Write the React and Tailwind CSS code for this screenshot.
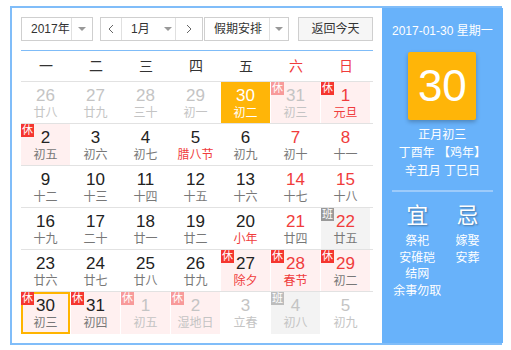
import React from 'react';

const font = "font-['Liberation_Sans','Noto_Sans_CJK_SC',sans-serif]";

// kind: cur | other ; red number ; fest = red lunar ; tag: 休 / 班
const rows = [
  [
    { d: 26, l: '廿八', other: true },
    { d: 27, l: '廿九', other: true },
    { d: 28, l: '三十', other: true },
    { d: 29, l: '初一', other: true },
    { d: 30, l: '初二', other: true, selected: true },
    { d: 31, l: '初三', other: true, tag: '休' },
    { d: 1, l: '元旦', red: true, fest: true, tag: '休' },
  ],
  [
    { d: 2, l: '初五', tag: '休' },
    { d: 3, l: '初六' },
    { d: 4, l: '初七' },
    { d: 5, l: '腊八节', fest: true },
    { d: 6, l: '初九' },
    { d: 7, l: '初十', red: true },
    { d: 8, l: '十一', red: true },
  ],
  [
    { d: 9, l: '十二' },
    { d: 10, l: '十三' },
    { d: 11, l: '十四' },
    { d: 12, l: '十五' },
    { d: 13, l: '十六' },
    { d: 14, l: '十七', red: true },
    { d: 15, l: '十八', red: true },
  ],
  [
    { d: 16, l: '十九' },
    { d: 17, l: '二十' },
    { d: 18, l: '廿一' },
    { d: 19, l: '廿二' },
    { d: 20, l: '小年', fest: true },
    { d: 21, l: '廿四', red: true },
    { d: 22, l: '廿五', red: true, tag: '班' },
  ],
  [
    { d: 23, l: '廿六' },
    { d: 24, l: '廿七' },
    { d: 25, l: '廿八' },
    { d: 26, l: '廿九' },
    { d: 27, l: '除夕', fest: true, tag: '休' },
    { d: 28, l: '春节', red: true, fest: true, tag: '休' },
    { d: 29, l: '初二', red: true, tag: '休' },
  ],
  [
    { d: 30, l: '初三', tag: '休', today: true },
    { d: 31, l: '初四', tag: '休' },
    { d: 1, l: '初五', other: true, tag: '休' },
    { d: 2, l: '湿地日', other: true, tag: '休' },
    { d: 3, l: '立春', other: true },
    { d: 4, l: '初八', other: true, tag: '班' },
    { d: 5, l: '初九', other: true },
  ],
];

const Caret = () => (
  <span className="w-0 h-0 border-l-[4px] border-r-[4px] border-t-[4px] border-l-transparent border-r-transparent border-t-[#999]" />
);

const Chevron = ({ dir }) => (
  <svg width="6" height="10" viewBox="0 0 6 10">
    <polyline
      points={dir === 'left' ? '5,1 1,5 5,9' : '1,1 5,5 1,9'}
      fill="none"
      stroke="#666"
      strokeWidth="1"
    />
  </svg>
);

function Cell({ c }) {
  let bg = '';
  if (c.selected) bg = 'bg-[#ffb508]';
  else if (c.tag === '休') bg = 'bg-[#fff0f0]';
  else if (c.tag === '班') bg = 'bg-[#f3f3f3]';

  let numColor = 'text-[#222]';
  if (c.selected) numColor = 'text-white';
  else if (c.other) numColor = 'text-[#c4c4c4]';
  else if (c.red) numColor = 'text-[#f03c3c]';

  let lunColor = 'text-[#777]';
  if (c.selected) lunColor = 'text-white';
  else if (c.other) lunColor = 'text-[#c4c4c4]';
  else if (c.fest) lunColor = 'text-[#f03c3c]';

  let tagBg = '';
  if (c.tag === '休') tagBg = c.other ? 'bg-[#f89a9a]' : 'bg-[#f5362f]';
  if (c.tag === '班') tagBg = c.other ? 'bg-[#bdbdbd]' : 'bg-[#999]';

  return (
    <div
      className={`relative w-[50px] h-full border-r border-white flex flex-col items-center pt-[4px] ${bg} ${
        c.today ? 'ring-2 ring-inset ring-[#ffb400]' : ''
      }`}
    >
      {c.tag && (
        <span
          className={`absolute left-0 top-0 w-[13px] h-[13px] text-[11px] leading-[13px] text-center text-white ${tagBg}`}
        >
          {c.tag}
        </span>
      )}
      <span className={`text-[17px] leading-[20px] ${numColor}`}>{c.d}</span>
      <span className={`text-[12px] leading-[14px] ${lunColor}`}>{c.l}</span>
    </div>
  );
}

export default function App() {
  const weekdays = ['一', '二', '三', '四', '五', '六', '日'];

  return (
    <div className={`pt-[6px] pl-[10px] bg-white w-[511px] h-[350px] ${font}`}>
      <div className="w-[492px] h-[339px] border-2 border-[#80bdf9] flex">
        {/* left: calendar */}
        <div className="w-[370px] h-full pt-[9px] px-[9px] bg-white">
          <div className="flex h-[24px] text-[12px] text-[#333]">
            <div className="w-[72px] h-full border border-[#cfcfcf] flex">
              <span className="w-[50px] pl-[9px] flex items-center border-r border-[#e0e0e0]">2017年</span>
              <span className="flex-1 flex items-center justify-center">
                <Caret />
              </span>
            </div>
            <div className="ml-[7px] flex h-full border border-[#cfcfcf]">
              <span className="w-[21px] flex items-center justify-center border-r border-[#e0e0e0]">
                <Chevron dir="left" />
              </span>
              <span className="w-[54px] flex items-center pl-[9px] border-r border-[#e0e0e0]">
                1月
                <span className="ml-[14px] flex">
                  <Caret />
                </span>
              </span>
              <span className="w-[26px] flex items-center justify-center">
                <Chevron dir="right" />
              </span>
            </div>
            <div className="ml-[1px] w-[85px] h-full border border-[#cfcfcf] flex">
              <span className="w-[65px] pl-[9px] flex items-center border-r border-[#e0e0e0]">假期安排</span>
              <span className="flex-1 flex items-center justify-center">
                <Caret />
              </span>
            </div>
            <div className="ml-[9px] w-[75px] h-full border border-[#cfcfcf] bg-[#f6f6f6] flex items-center justify-center">
              返回今天
            </div>
          </div>

          <div className="mt-[9px] h-px bg-[#7fbcf8]" />

          <div className="flex h-[31px] border-b border-[#e2e2e2]">
            {weekdays.map((w, i) => (
              <div
                key={w}
                className={`w-[50px] flex items-center justify-center text-[14px] ${
                  i >= 5 ? 'text-[#f03c3c]' : 'text-[#333]'
                }`}
              >
                {w}
              </div>
            ))}
          </div>

          {rows.map((r, ri) => (
            <div
              key={ri}
              className={`flex h-[42px] ${ri < rows.length - 1 ? 'border-b border-[#e2e2e2]' : ''}`}
            >
              {r.map((c, ci) => (
                <Cell key={ci} c={c} />
              ))}
            </div>
          ))}
        </div>

        {/* right: detail panel */}
        <div className="flex-1 h-full bg-[#68b2fa] px-[10px] pt-[15px] text-white flex flex-col items-center">
          <div className="text-[12px] leading-[16px] whitespace-nowrap">2017-01-30 星期一</div>
          <div className="mt-[13px] w-[68px] h-[68px] bg-[#ffb508] rounded-[2px] shadow-[0_2px_4px_rgba(0,0,0,0.25)] flex items-center justify-center text-[44px] leading-none">
            30
          </div>
          <div className="mt-[6px] text-[12px] leading-[18px] text-center whitespace-nowrap">
            <div>正月初三</div>
            <div>丁酉年 【鸡年】</div>
            <div>辛丑月 丁巳日</div>
          </div>
          <div className="mt-[10px] w-full h-[2px] bg-[#9dcbfa]" />
          <div className="mt-[11px] w-full flex">
            <div className="flex-1 flex flex-col items-center">
              <span className="text-[22px] leading-[26px] [text-shadow:1px_1px_2px_rgba(0,0,0,0.35)]">宜</span>
              <div className="mt-[4px] text-[12px] leading-[16.5px] text-center whitespace-nowrap">
                <div>祭祀</div>
                <div>安碓硙</div>
                <div>结网</div>
                <div>余事勿取</div>
              </div>
            </div>
            <div className="flex-1 flex flex-col items-center">
              <span className="text-[22px] leading-[26px] [text-shadow:1px_1px_2px_rgba(0,0,0,0.35)]">忌</span>
              <div className="mt-[4px] text-[12px] leading-[16.5px] text-center whitespace-nowrap">
                <div>嫁娶</div>
                <div>安葬</div>
              </div>
            </div>
          </div>
        </div>
      </div>
    </div>
  );
}
